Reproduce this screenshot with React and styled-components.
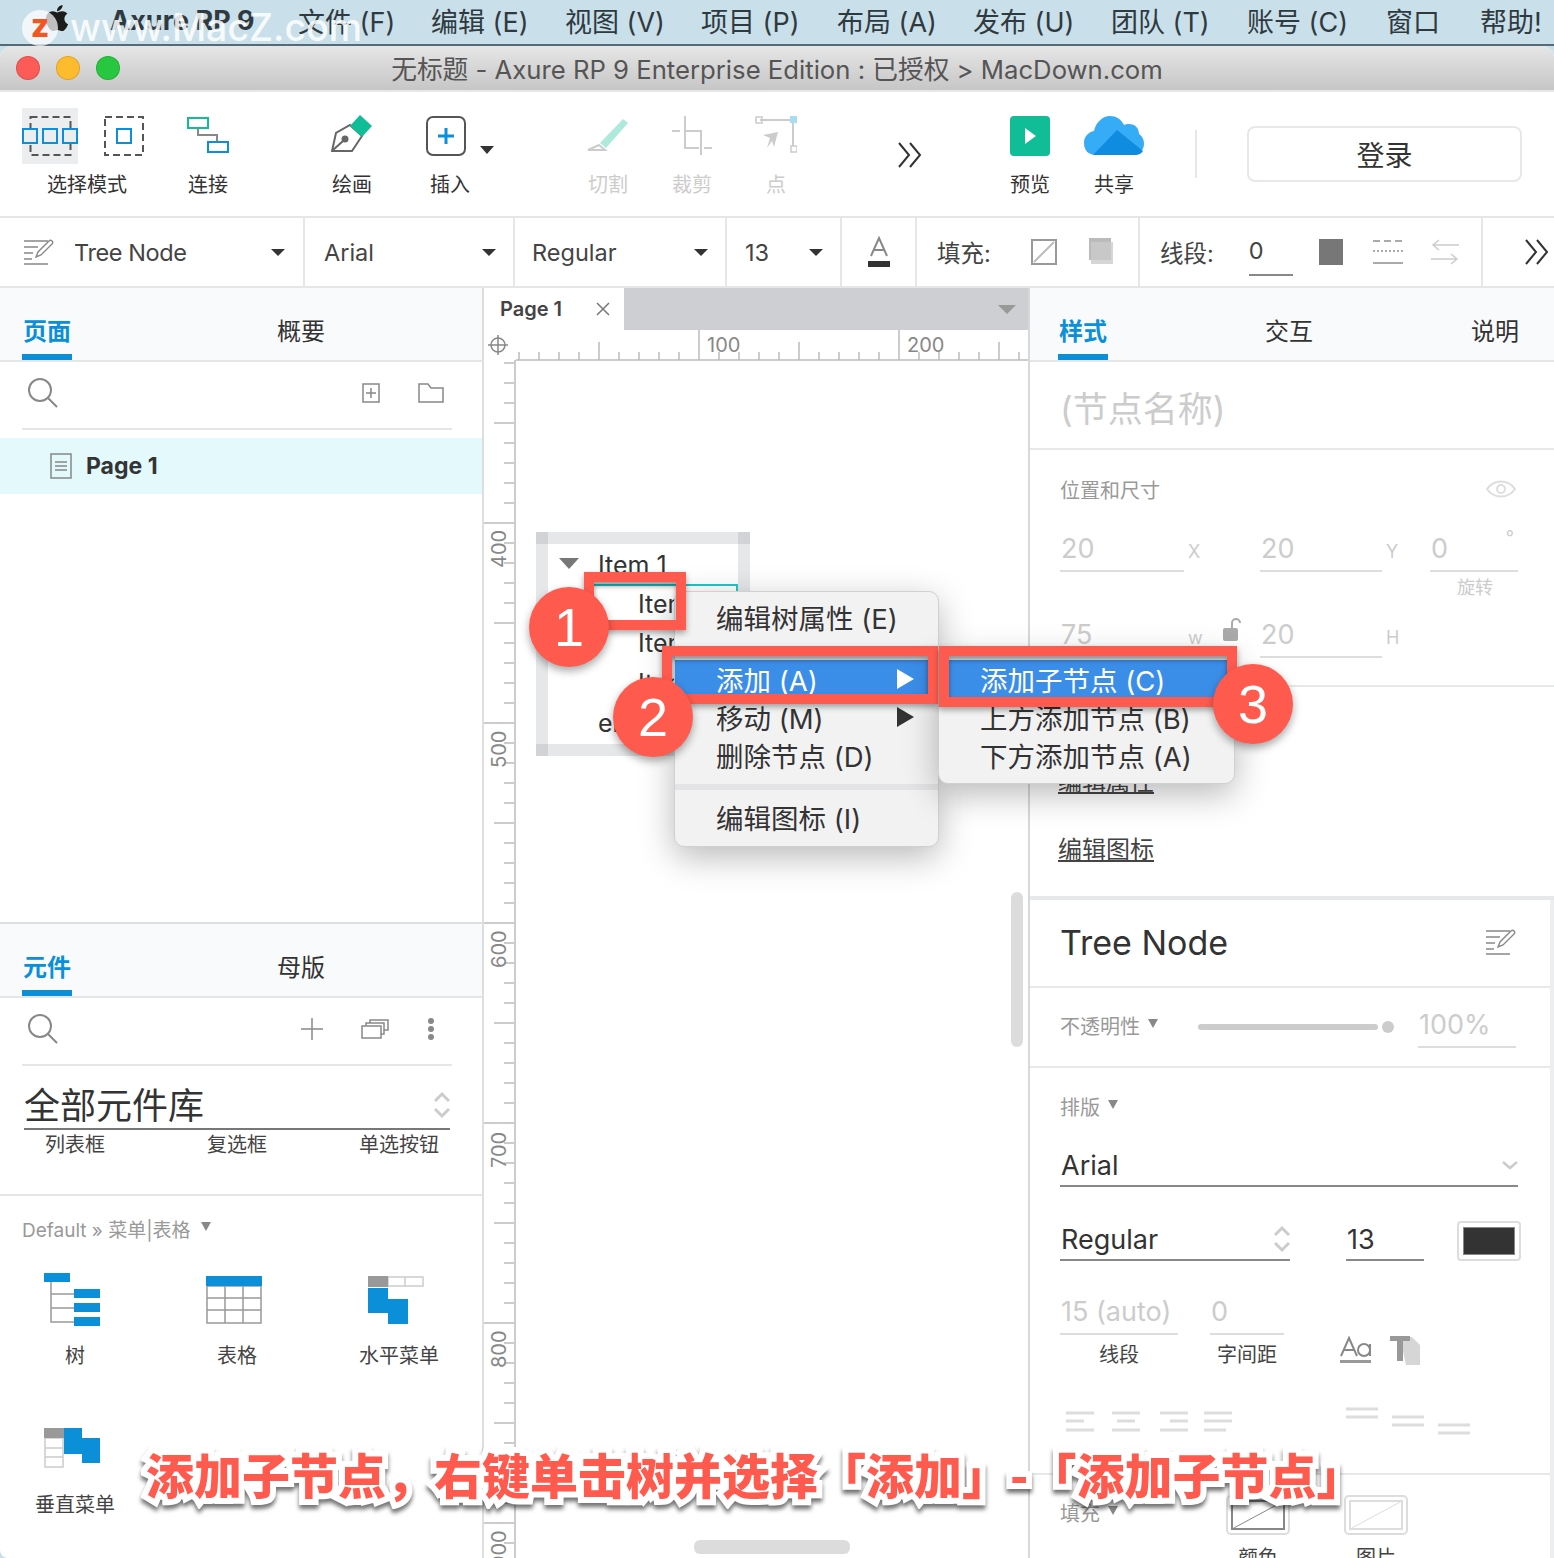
import React from "react";
import styled, { createGlobalStyle } from "styled-components";
import { FaApple } from "react-icons/fa";

const GlobalStyle = createGlobalStyle`
  html, body { margin: 0; padding: 0; background: #fff; }
  * { box-sizing: border-box; }
`;

const BLUE = "#0a8fd8";
const RED = "#ff5a4d";
const LINE = "#e4e6e8";

const Page = styled.div`
  position: relative;
  width: 1554px;
  height: 1558px;
  overflow: hidden;
  background: #c9dfe9;
  font-family: Inter, "Noto Sans CJK SC", sans-serif;
  color: #333;
`;

const MenuBar = styled.div`
  display: flex;
  align-items: center;
  gap: 39px;
  height: 46px;
  padding: 0 0 4px 110px;
  font-size: 27px;
  white-space: nowrap;
  color: #2f3a40;
  border-bottom: 2px solid #556b78;
`;

const AppName = styled.span`
  flex: 0 0 149px;
  min-width: 0;
  font-weight: 700;
  font-size: 27px;
`;

const MenuItem = styled.span`
  flex: 0 0 ${p => p.$w}px;
  min-width: 0;
`;

const Window = styled.div`
  height: 1512px;
  background: #fff;
  border-radius: 12px 12px 0 8px;
  overflow: hidden;
  display: flex;
  flex-direction: column;
`;

const TitleBar = styled.div`
  position: relative;
  flex: 0 0 46px;
  display: flex;
  align-items: center;
  justify-content: center;
  padding-bottom: 2px;
  background: linear-gradient(#e6e6e6, #c6c6c6);
  border-bottom: 2px solid #e8e8e8;
  font-size: 25.7px;
  color: #555;
`;

const Lights = styled.div`
  position: absolute;
  left: 16px;
  top: 10px;
  display: flex;
  gap: 16px;
`;

const Light = styled.span`
  width: 24px;
  height: 24px;
  border-radius: 50%;
  background: ${p => p.$c};
  border: 1px solid rgba(0, 0, 0, 0.12);
`;

const Toolbar = styled.div`
  flex: 0 0 126px;
  display: flex;
  padding-left: 22px;
  border-bottom: 2px solid ${LINE};
`;

const ToolItem = styled.div`
  position: relative;
  flex: 0 0 ${p => p.$w || 84}px;
  margin-left: ${p => p.$ml || 0}px;
  display: flex;
  flex-direction: column;
  align-items: center;
  padding-top: 16px;
`;

const IconSlot = styled.div`
  height: 56px;
  margin-right: ${p => p.$shift || 0}px;
  padding-top: ${p => p.$pt || 0}px;
  display: flex;
  gap: 4px;
  align-items: flex-start;
`;

const ToolLabel = styled.div`
  margin-top: 8px;
  font-size: 20px;
  line-height: 26px;
  color: ${p => (p.$muted ? "#ccc" : "#333")};
`;

const InsertCaret = styled.span`
  position: absolute;
  left: 72px;
  top: 54px;
  width: 0;
  height: 0;
  border-left: 7px solid transparent;
  border-right: 7px solid transparent;
  border-top: 8px solid #333;
`;

const ToolDivider = styled.div`
  width: 2px;
  height: 48px;
  margin: 38px 0 0 39px;
  background: #e6e6e6;
`;

const LoginButton = styled.div`
  width: 275px;
  height: 56px;
  margin: 34px 0 0 50px;
  border: 2px solid #e6e8ea;
  border-radius: 8px;
  display: flex;
  align-items: center;
  justify-content: center;
  font-size: 28px;
  color: #333;
`;

const FormatBar = styled.div`
  flex: 0 0 70px;
  display: flex;
  border-bottom: 2px solid ${LINE};
`;

const FormatCell = styled.div`
  flex: 0 0 ${p => p.$w}px;
  display: flex;
  align-items: center;
  padding: 0 ${p => p.$pr || 0}px 0 ${p => p.$pl || 0}px;
  border-right: 2px solid ${LINE};
  font-size: 23.5px;
  color: #444;
  &:last-child { border-right: 0; flex: 1; }
`;

const Caret = styled.span`
  margin-left: ${p => p.$ml || "auto"};
  margin-bottom: ${p => p.$up || 0}px;
  width: 0;
  height: 0;
  border-left: ${p => p.$s || 7}px solid transparent;
  border-right: ${p => p.$s || 7}px solid transparent;
  border-top: ${p => p.$t || p.$s || 7}px solid ${p => p.$c || "#333"};
`;

const CellText = styled.span`
  margin-left: ${p => p.$ml}px;
  letter-spacing: -0.4px;
`;

const CellGap = styled.span`
  flex: 0 0 ${p => p.$w}px;
`;

const FormatValue = styled.span`
  width: 44px;
  height: 44px;
  margin-left: 35px;
  margin-top: 4px;
  line-height: 38px;
  border-bottom: 2px solid #888;
`;

const StrokeColor = styled.span`
  width: 24px;
  height: 26px;
  margin-left: 26px;
  background: #777;
`;

const Workspace = styled.div`
  flex: 1;
  display: flex;
  min-height: 0;
`;

const LeftPanel = styled.div`
  flex: 0 0 484px;
  display: flex;
  flex-direction: column;
  border-right: 2px solid #dcdee0;
`;

const PanelTop = styled.div`
  flex: 0 0 636px;
  border-bottom: 2px solid #dcdee0;
`;

const Tabs = styled.div`
  flex: 0 0 74px;
  display: flex;
  gap: ${p => p.$gap}px;
  height: 74px;
  padding-left: ${p => p.$pl}px;
  background: #f9fafc;
  border-bottom: 2px solid ${LINE};
`;

const Tab = styled.div`
  width: 50px;
  height: 72px;
  padding-top: 16px;
  display: flex;
  align-items: center;
  justify-content: center;
  font-size: 24px;
  white-space: nowrap;
  font-weight: ${p => (p.$active ? 700 : 400)};
  color: ${p => (p.$active ? BLUE : "#333")};
  border-bottom: 6px solid ${p => (p.$active ? BLUE : "transparent")};
`;

const SearchRow = styled.div`
  height: 68px;
  margin-left: 22px;
  width: 430px;
  padding: 0 ${p => p.$pr}px 4px 6px;
  display: flex;
  align-items: center;
  gap: 38px;
  border-bottom: 2px solid ${LINE};
  & > svg:first-child { margin-right: auto; }
`;

const PageRow = styled.div`
  height: 56px;
  margin-top: 8px;
  padding-left: 50px;
  display: flex;
  align-items: center;
  gap: 14px;
  background: #e3f9fb;
  font-size: 23px;
  font-weight: 700;
  color: #333;
`;

const LibrarySelect = styled.div`
  height: 64px;
  margin-left: 24px;
  width: 426px;
  display: flex;
  align-items: flex-end;
  justify-content: space-between;
  font-size: 36px;
  line-height: 44px;
  color: #333;
  border-bottom: 2px solid #777;
  svg { margin-bottom: 8px; }
`;

const CutRow = styled.div`
  display: grid;
  grid-template-columns: repeat(3, 150px);
  column-gap: 12px;
  height: 66px;
  padding-top: 2px;
  text-align: center;
  font-size: 20px;
  line-height: 26px;
  color: #444;
  border-bottom: 2px solid ${LINE};
`;

const Crumb = styled.div`
  display: flex;
  align-items: center;
  gap: 8px;
  height: 24px;
  margin: 20px 0 0 22px;
  font-size: 19px;
  color: #999;
`;

const WidgetGrid = styled.div`
  display: grid;
  grid-template-columns: repeat(3, 150px);
  column-gap: 12px;
  row-gap: 58px;
  margin-top: 32px;
`;

const WidgetCell = styled.div`
  display: flex;
  flex-direction: column;
  align-items: center;
`;

const WidgetIcon = styled.div`
  height: ${p => p.$h || 56}px;
  margin: 0 6px 14px 0;
`;

const WidgetLabel = styled.div`
  font-size: 20px;
  line-height: 28px;
  color: #444;
`;

const Center = styled.div`
  position: relative;
  flex: 0 0 546px;
  display: flex;
  flex-direction: column;
  border-right: 2px solid #d6d8da;
`;

const DocTabs = styled.div`
  flex: 0 0 42px;
  display: flex;
  align-items: center;
  justify-content: space-between;
  padding-right: 12px;
  background: #cdcfd2;
`;

const DocTab = styled.div`
  width: 140px;
  height: 42px;
  padding: 0 14px 0 16px;
  display: flex;
  align-items: center;
  justify-content: space-between;
  background: #fff;
  font-size: 20px;
  font-weight: 600;
  color: #444;
`;

const RulerH = styled.div`
  flex: 0 0 32px;
  background: #fff;
  svg { display: block; }
`;

const CanvasRow = styled.div`
  flex: 1;
  display: flex;
  min-height: 0;
`;

const RulerV = styled.div`
  flex: 0 0 32px;
  border-right: 2px solid #ccc;
  margin-top: -2px;
  svg { display: block; }
`;

const Canvas = styled.div`
  position: relative;
  flex: 1;
`;

const TreeBox = styled.div`
  position: absolute;
  left: 20px;
  top: 170px;
  width: 214px;
  height: 224px;
  border: 12px solid #e6e7e9;
`;

const TreeCorner = styled.span`
  position: absolute;
  width: 12px;
  height: 12px;
  background: #d2d3d6;
  ${p => p.$pos}
`;

const TreeLine = styled.div`
  position: absolute;
  left: ${p => p.$x}px;
  top: ${p => p.$y}px;
  font-size: 25px;
  line-height: 30px;
  color: #333;
  white-space: nowrap;
`;

const TreeToggle = styled.span`
  position: absolute;
  left: 11px;
  top: 14px;
  width: 0;
  height: 0;
  border-left: 10px solid transparent;
  border-right: 10px solid transparent;
  border-top: 11px solid #777;
`;

const TreeSelect = styled.div`
  position: absolute;
  left: 36px;
  top: 40px;
  width: 154px;
  height: 40px;
  border: 2px solid #1fc8c8;
`;

const ScrollThumb = styled.div`
  position: absolute;
  background: #dcdcdc;
  border-radius: 6px;
  left: ${p => p.$x}px;
  top: ${p => p.$y}px;
  width: ${p => p.$w}px;
  height: ${p => p.$h}px;
`;

const RightPanel = styled.div`
  flex: 1;
  display: flex;
  flex-direction: column;
  min-width: 0;
`;

const Section = styled.div`
  flex: 0 0 ${p => p.$h}px;
  padding: ${p => p.$pt || 0}px 0 0 30px;
  border-bottom: ${p => p.$bw || 2}px solid #e6e8ea;
`;

const NodeName = styled.div`
  font-size: 35px;
  line-height: 50px;
  color: #ccc;
`;

const HeadRow = styled.div`
  display: flex;
  align-items: center;
  justify-content: space-between;
  padding-right: 38px;
  height: 24px;
  font-size: 20px;
  color: #999;
`;

const HeadLabel = styled.span`
  display: flex;
  align-items: center;
  gap: 8px;
  margin-top: ${p => p.$mt || 0}px;
  font-size: 20px;
  color: #999;
`;

const Row = styled.div`
  display: flex;
  align-items: flex-start;
  height: ${p => p.$h || 46}px;
  margin-top: ${p => p.$mt || 0}px;
`;

const Field = styled.div`
  width: ${p => p.$w}px;
  flex: 0 0 auto;
  height: 46px;
  margin-left: ${p => p.$ml || 0}px;
  padding: ${p => (p.$c ? 4 : 0)}px ${p => p.$pr || 0}px 0 1px;
  display: flex;
  align-items: center;
  justify-content: space-between;
  font-size: 27px;
  color: ${p => p.$c || "#ccc"};
  border-bottom: 2px solid ${p => p.$line || "#ddd"};
  white-space: nowrap;
`;

const Unit = styled.div`
  flex: 0 0 ${p => p.$w}px;
  height: 46px;
  display: flex;
  align-items: center;
  gap: ${p => p.$gap || 14}px;
  padding-left: 4px;
  padding-top: 4px;
  font-size: 18px;
  color: #ccc;
  svg { margin-top: -14px; }
`;

const FieldColumn = styled.div`
  display: flex;
  flex-direction: column;
  text-align: center;
`;

const Degree = styled.span`
  align-self: flex-start;
  font-size: 18px;
  line-height: 24px;
  color: #ccc;
`;

const SmallLabel = styled.div`
  margin-top: ${p => p.$mt || 4}px;
  padding-left: ${p => p.$pl || 0}px;
  font-size: ${p => p.$fs || 18}px;
  line-height: 24px;
  color: ${p => p.$c || "#ccc"};
`;

const EditLink = styled.div`
  width: max-content;
  margin: ${p => p.$mt}px 0 0 -2px;
  font-size: 24px;
  line-height: 28px;
  color: #444;
  text-decoration: underline;
`;

const NodeTitle = styled.div`
  display: flex;
  align-items: center;
  justify-content: space-between;
  padding-right: 38px;
  height: 84px;
  font-size: 34px;
  color: #333;
`;

const OpacityRow = styled.div`
  display: flex;
  align-items: center;
  height: 74px;
  font-size: 20px;
  color: #999;
`;

const Slider = styled.div`
  width: 180px;
  height: 6px;
  margin: 4px 0 0 40px;
  border-radius: 3px;
  background: #ccc;
`;

const SliderDot = styled.span`
  width: 12px;
  height: 12px;
  margin: 4px 0 0 4px;
  border-radius: 50%;
  background: #ccc;
`;

const Swatch = styled.div`
  width: 64px;
  height: 40px;
  margin: 6px 0 0 ${p => p.$ml || 0}px;
  padding: 4px;
  border: 2px solid #ddd;
  border-radius: 4px;
  background: #fff;
`;

const SwatchFill = styled.div`
  height: 100%;
  background: ${p => p.$c};
  border: 1px solid #888;
`;

const TextStyleIcons = styled.span`
  display: flex;
  gap: 18px;
  margin: 46px 0 0 56px;
`;

const AlignWrap = styled.span`
  margin: ${p => p.$mt || 0}px 0 0 ${p => p.$ml}px;
`;

const FillOption = styled.div`
  display: flex;
  flex-direction: column;
  align-items: center;
  gap: 7px;
  margin-left: ${p => p.$ml}px;
  font-size: 20px;
  color: #444;
`;

const Scrollbar = styled.div`
  position: absolute;
  right: 0;
  top: 900px;
  bottom: 0;
  width: 4px;
  background: #eceef0;
`;

const Watermark = styled.div`
  position: absolute;
  left: 70px;
  top: 3px;
  font-size: 37.5px;
  line-height: 50px;
  font-weight: 500;
  color: rgba(255, 255, 255, 0.85);
  white-space: nowrap;
`;

const ZBadge = styled.div`
  position: absolute;
  left: 22px;
  top: 10px;
  width: 36px;
  height: 36px;
  border-radius: 50%;
  background: rgba(255, 255, 255, 0.72);
  display: flex;
  align-items: center;
  justify-content: center;
  font-size: 32px;
  line-height: 32px;
  padding-bottom: 5px;
  font-weight: 800;
  color: #f2571f;
`;

const AppleMark = styled.div`
  position: absolute;
  left: 42px;
  top: 3px;
  color: #1c1c1c;
  display: flex;
`;

const Menu = styled.div`
  position: absolute;
  left: ${p => p.$x}px;
  top: ${p => p.$y}px;
  width: ${p => p.$w}px;
  height: ${p => p.$h}px;
  background: #f2f2f3;
  border-radius: 10px;
  border: 1px solid #d0d0d0;
  box-shadow: 0 10px 34px rgba(0, 0, 0, 0.28);
`;

const MenuRow = styled.div`
  display: flex;
  align-items: center;
  justify-content: space-between;
  height: 38px;
  padding: 0 ${p => p.$pr || 24}px 0 41px;
  margin-top: ${p => p.$mt || 0}px;
  font-size: 27.5px;
  color: ${p => (p.$active ? "#fff" : "#333")};
  background: ${p => (p.$active ? "#3b8ee8" : "transparent")};
  white-space: nowrap;
`;

const MenuArrow = styled.span`
  width: 0;
  height: 0;
  border-top: 10px solid transparent;
  border-bottom: 10px solid transparent;
  border-left: 17px solid ${p => (p.$light ? "#fff" : "#333")};
`;

const MenuRule = styled.div`
  height: 6px;
  margin-top: 10px;
  background: #e4e4e6;
`;

const Callout = styled.div`
  position: absolute;
  left: ${p => p.$x}px;
  top: ${p => p.$y}px;
  width: ${p => p.$w}px;
  height: ${p => p.$h}px;
  border: 10px solid ${RED};
  box-shadow: 0 3px 6px rgba(0, 0, 0, 0.35), inset 0 4px 5px rgba(0, 0, 0, 0.4);
`;

const StepBadge = styled.div`
  position: absolute;
  left: ${p => p.$x - 40}px;
  top: ${p => p.$y - 40}px;
  width: 80px;
  height: 80px;
  border-radius: 50%;
  background: ${RED};
  box-shadow: 0 4px 8px rgba(0, 0, 0, 0.35);
  display: flex;
  align-items: center;
  justify-content: center;
  font-family: "Liberation Sans", sans-serif;
  font-size: 54px;
  color: #fff;
`;

const Caption = styled.div`
  position: absolute;
  left: 146px;
  top: 1438px;
  font-family: "Noto Sans CJK SC", sans-serif;
  font-size: 48px;
  line-height: 70px;
  font-weight: 900;
  color: ${RED};
  white-space: nowrap;
  -webkit-text-stroke: 12px #fff;
  paint-order: stroke fill;
  filter: drop-shadow(0 4px 2px rgba(0, 0, 0, 0.55));
`;

const Search = () => (
  <svg width="30" height="30" viewBox="0 0 30 30" fill="none" stroke="#888" strokeWidth="2">
    <circle cx="12" cy="12" r="11" /><path d="M20 20l9 9" />
  </svg>
);

const EditLines = () => (
  <svg width="30" height="26" viewBox="0 0 30 26" fill="none" stroke="#888" strokeWidth="1.4">
    <path d="M0 2h24M0 8h14M0 14h9M0 20h8M0 25h24" />
    <path d="M12 18l2-5L25 2a2 2 0 0 1 3 3L17 16z" fill="#fff" />
  </svg>
);

const Chevrons = () => (
  <svg width="24" height="26" viewBox="0 0 24 26" fill="none" stroke="#333" strokeWidth="2">
    <path d="M1 1l10 12L1 25M12 1l10 12-10 12" />
  </svg>
);

const UpDown = () => (
  <svg width="16" height="30" viewBox="0 0 16 30" fill="none" stroke="#ccc" strokeWidth="3">
    <path d="M1 11l7-7 7 7M1 19l7 7 7-7" />
  </svg>
);

const SelectAll = () => (
  <svg width="56" height="56" viewBox="0 0 56 56" fill="none">
    <rect width="56" height="56" fill="#ebedef" />
    <rect x="8.5" y="9" width="40" height="38" stroke="#555" strokeWidth="2" strokeDasharray="7 4" />
    <g stroke="#0a8fd8" strokeWidth="2" fill="#ebedef">
      <rect x="1" y="21" width="14" height="14" /><rect x="21" y="21" width="14" height="14" /><rect x="41" y="21" width="14" height="14" />
    </g>
  </svg>
);

const SelectOne = () => (
  <svg width="40" height="56" viewBox="0 0 40 56" fill="none" style={{ marginLeft: 22 }}>
    <rect x="1" y="9" width="38" height="38" stroke="#555" strokeWidth="2" strokeDasharray="7 4" />
    <rect x="13" y="21" width="14" height="14" stroke="#0a8fd8" strokeWidth="2" />
  </svg>
);

const Connect = () => (
  <svg width="42" height="56" viewBox="0 0 42 56" fill="none" strokeWidth="2">
    <path d="M11 18v9h19v9" stroke="#888" />
    <rect x="1" y="10" width="20" height="10" stroke="#10bd96" fill="#fff" />
    <rect x="21" y="34" width="20" height="10" stroke="#0a8fd8" fill="#fff" />
  </svg>
);

const Pen = () => (
  <svg width="42" height="56" viewBox="0 0 42 56" fill="none">
    <path d="M19 17l12 11-10 15H1l4-18z" fill="#fff" stroke="#666" strokeWidth="2" />
    <path d="M19 18L29 7l12 11-10 11z" fill="#10bd96" />
    <circle cx="14" cy="31" r="3.5" fill="#666" /><path d="M2 42l10-9" stroke="#666" strokeWidth="2" />
  </svg>
);

const InsertIcon = () => (
  <svg width="40" height="56" viewBox="0 0 40 56" fill="none">
    <rect x="1" y="9" width="38" height="38" rx="6" stroke="#555" strokeWidth="2" />
    <path d="M20 20v16M12 28h16" stroke="#0a8fd8" strokeWidth="3" />
  </svg>
);

const Cutter = () => (
  <svg width="42" height="56" viewBox="0 0 42 56" fill="none">
    <path d="M36 11l5 4-22 25-6-5z" fill="#aeeadb" />
    <path d="M12 37l6 5H1z" stroke="#ccc" strokeWidth="2" />
  </svg>
);

const Crop = () => (
  <svg width="42" height="56" viewBox="0 0 42 56" fill="none" stroke="#ccc" strokeWidth="2">
    <path d="M1 23h8M14 8v32h14M14 23h16v24M33 40h8" />
  </svg>
);

const PointIcon = () => (
  <svg width="42" height="56" viewBox="0 0 42 56" fill="none">
    <path d="M5 12h30M38 14v24" stroke="#ccc" strokeWidth="2" />
    <rect x="1" y="9" width="6" height="6" stroke="#ccc" strokeWidth="1.5" />
    <rect x="35" y="8" width="7" height="7" fill="#a8dcf5" />
    <rect x="36" y="38" width="6" height="6" stroke="#ccc" strokeWidth="1.5" />
    <path d="M12 40l3-10-7-3 15-3-4 15-2-6z" fill="#ccc" />
  </svg>
);

const PreviewIcon = () => (
  <svg width="40" height="56" viewBox="0 0 40 56">
    <rect y="8" width="40" height="40" rx="4" fill="#10bd96" /><path d="M15 20l11 8-11 8z" fill="#fff" />
  </svg>
);

const Cloud = () => (
  <svg width="60" height="56" viewBox="0 0 60 56">
    <path d="M12 47C4 47 0 42 0 35c0-6 4-11 10-12C12 14 19 8 26 8c6 0 11 3 14 9 2-1 3-1 5-1 6 0 10 4 10 10 3 2 5 5 5 10 0 6-5 11-11 11z" fill="#35acf5" />
    <path d="M9 47l24-25 26 21c-1 2-4 4-8 4z" fill="#0f8be0" />
  </svg>
);

const TextColor = () => (
  <svg width="24" height="32" viewBox="0 0 24 32" fill="none">
    <path d="M4 20l8-18 8 18M7 14h10" stroke="#888" strokeWidth="2" /><rect x="1" y="25" width="22" height="6" fill="#333" />
  </svg>
);

const NoFill = () => (
  <svg width="26" height="26" viewBox="0 0 26 26" fill="none" stroke="#999" strokeWidth="2">
    <rect x="1" y="1" width="24" height="24" /><path d="M3 23L23 3" stroke="#bbb" />
  </svg>
);

const Shade = () => (
  <svg width="28" height="28" viewBox="0 0 28 28"><rect x="2" width="22" height="22" fill="#bbb" /><rect x="4" y="4" width="22" height="22" fill="#ccc" opacity=".8" /></svg>
);

const DashLines = () => (
  <svg width="30" height="26" viewBox="0 0 30 26" stroke="#aaa" strokeWidth="2" fill="none">
    <path d="M0 2h30" strokeDasharray="7 4" /><path d="M0 12h30" strokeDasharray="2 2" /><path d="M0 24h30" />
  </svg>
);

const Arrows = () => (
  <svg width="28" height="26" viewBox="0 0 28 26" stroke="#ccc" strokeWidth="1.5" fill="none">
    <path d="M28 6H2M8 1L2 6l6 5M0 20h26M20 15l6 5-6 5" />
  </svg>
);

const PlusBox = () => (
  <svg width="18" height="20" viewBox="0 0 18 20" fill="none" stroke="#888" strokeWidth="1.5">
    <rect x="1" y="1" width="16" height="18" /><path d="M9 5v10M4 10h10" />
  </svg>
);

const Folder = () => (
  <svg width="26" height="20" viewBox="0 0 26 20" fill="none" stroke="#888" strokeWidth="1.5">
    <path d="M1 19V1h9l3 4h12v14z" />
  </svg>
);

const PageIcon = () => (
  <svg width="22" height="26" viewBox="0 0 22 26" fill="none" stroke="#888" strokeWidth="1.5">
    <rect x="1" y="1" width="20" height="24" /><path d="M5 9h12M5 13h12M5 17h12" />
  </svg>
);

const Plus = () => (
  <svg width="22" height="22" viewBox="0 0 22 22" stroke="#888" strokeWidth="1.5"><path d="M11 0v22M0 11h22" /></svg>
);

const Stack = () => (
  <svg width="28" height="20" viewBox="0 0 28 20" fill="none" stroke="#888" strokeWidth="1.5">
    <rect x="1" y="7" width="19" height="12" /><path d="M5 7V4h18v11h-3M9 4V1h18v10h-4" />
  </svg>
);

const Dots = () => (
  <svg width="8" height="22" viewBox="0 0 8 22" fill="#888"><circle cx="4" cy="3" r="3" /><circle cx="4" cy="11" r="3" /><circle cx="4" cy="19" r="3" /></svg>
);

const CloseX = () => (
  <svg width="14" height="14" viewBox="0 0 14 14" stroke="#777" strokeWidth="1.5"><path d="M1 1l12 12M13 1L1 13" /></svg>
);

const Eye = () => (
  <svg width="30" height="18" viewBox="0 0 30 18" fill="none" stroke="#ddd" strokeWidth="2">
    <path d="M1 9c7-10 21-10 28 0-7 10-21 10-28 0z" /><circle cx="15" cy="9" r="4" />
  </svg>
);

const Lock = () => (
  <svg width="20" height="24" viewBox="0 0 20 24" fill="none">
    <rect y="10" width="15" height="13" rx="2" fill="#aaa" /><path d="M9 10V5a4 4 0 0 1 8 0" stroke="#aaa" strokeWidth="2" />
  </svg>
);

const Down = () => (
  <svg width="16" height="10" viewBox="0 0 16 10" fill="none" stroke="#ccc" strokeWidth="2.5"><path d="M1 2l7 6 7-6" /></svg>
);

const CaseIcon = () => (
  <svg width="32" height="28" viewBox="0 0 32 28" fill="none">
    <path d="M1 21L9 3l8 18M4 15h10" stroke="#888" strokeWidth="2" />
    <circle cx="24" cy="15" r="6" stroke="#888" strokeWidth="2" /><path d="M30 9v12" stroke="#888" strokeWidth="2" />
    <rect y="25" width="31" height="3" fill="#999" />
  </svg>
);

const ShadowT = () => (
  <svg width="30" height="30" viewBox="0 0 30 30">
    <path d="M10 2h12l8 8v20H16z" fill="#d6d6d6" /><path d="M0 1h20v5h-7v20H7V6H0z" fill="#999" />
  </svg>
);

const AlignSet = () => (
  <svg width="170" height="22" viewBox="0 0 170 22" stroke="#ddd" strokeWidth="3">
    <path d="M0 2h28M0 10h18M0 19h28M46 2h28M51 10h18M46 19h28M94 2h28M104 10h18M94 19h28M138 2h28M138 10h28M138 19h22" />
  </svg>
);

const VAlignSet = () => (
  <svg width="126" height="30" viewBox="0 0 126 30" stroke="#ddd" strokeWidth="3">
    <path d="M0 2h32M0 10h32M46 10h32M46 18h32M92 18h32M92 26h32" />
  </svg>
);

const FillPreview = ({ c }) => (
  <svg width="64" height="40" viewBox="0 0 64 40" fill="none">
    <rect x="1" y="1" width="62" height="38" rx="4" stroke="#ddd" strokeWidth="2" />
    <rect x="6" y="6" width="52" height="28" stroke={c} strokeWidth="2" /><path d="M6 34L58 6" stroke={c} />
  </svg>
);

const TreeWidget = () => (
  <svg width="56" height="56" viewBox="0 0 56 56" fill="none">
    <path d="M7 10v40h24M7 22h24M7 36h24" stroke="#999" strokeWidth="1.5" />
    <rect y="1" width="26" height="9" fill={BLUE} /><rect x="30" y="17" width="26" height="9" fill={BLUE} />
    <rect x="30" y="31" width="26" height="9" fill={BLUE} /><rect x="30" y="45" width="26" height="9" fill={BLUE} />
  </svg>
);

const TableWidget = () => (
  <svg width="56" height="56" viewBox="0 0 56 56" fill="none">
    <rect x="1" y="10" width="54" height="37" stroke="#999" strokeWidth="1.5" transform="translate(0 4)" />
    <path d="M19 14v37M37 14v37M1 26h54M1 38h54" stroke="#999" strokeWidth="1.5" />
    <rect y="4" width="56" height="10" fill={BLUE} />
  </svg>
);

const HMenuWidget = () => (
  <svg width="56" height="56" viewBox="0 0 56 56" fill="none">
    <rect x="20" y="5" width="35" height="9" stroke="#ccc" strokeWidth="1.5" /><path d="M37 5v9" stroke="#ccc" strokeWidth="1.5" />
    <rect y="4" width="20" height="11" fill="#999" />
    <path d="M0 16h20v11h20v25H20V41H0z" fill={BLUE} />
  </svg>
);

const VMenuWidget = () => (
  <svg width="56" height="42" viewBox="0 0 56 42" fill="none">
    <rect x="1" y="10" width="18" height="29" stroke="#ccc" strokeWidth="1.5" /><path d="M1 20h18M1 29h18" stroke="#ccc" strokeWidth="1.5" />
    <rect width="20" height="10" fill="#999" />
    <path d="M20 0h18v10h18v25H38v-9H20z" fill={BLUE} />
  </svg>
);

const range = (n, f) => Array.from({ length: n }, (_, i) => f(i));

const HorizontalRuler = () => (
  <svg width="544" height="32" viewBox="0 0 544 32" fill="none">
    <circle cx="14" cy="15" r="7" stroke="#888" strokeWidth="1.5" />
    <path d="M14 5v20M4 15h20" stroke="#888" strokeWidth="1.5" />
    <path d="M32 30h512" stroke="#ccc" strokeWidth="2" />
    {range(26, i => {
      const x = 35 + i * 20;
      const big = i % 10 === 9;
      const mid = i % 10 === 4;
      return <path key={i} d={`M${x} ${big ? 0 : mid ? 12 : 22}V30`} stroke="#bbb" strokeWidth="1.5" />;
    })}
    <text x="223" y="22" fontFamily="Inter, sans-serif" fontSize="20" fill="#888">100</text>
    <text x="423" y="22" fontFamily="Inter, sans-serif" fontSize="20" fill="#888">200</text>
  </svg>
);

const VerticalRuler = () => (
  <svg width="30" height="1200" viewBox="0 0 30 1200" fill="none">
    {range(60, i => {
      const y = 3 + i * 20;
      const big = i % 10 === 8;
      const mid = i % 10 === 3;
      return <path key={i} d={`M${big ? 0 : mid ? 10 : 20} ${y}H30`} stroke="#bbb" strokeWidth="1.5" />;
    })}
    {[400, 500, 600, 700, 800, 900].map((v, i) => (
      <text key={v} transform={`translate(22 ${208 + i * 200}) rotate(-90)`} fontFamily="Inter, sans-serif" fontSize="20" fill="#888">{v}</text>
    ))}
  </svg>
);

export default function App() {
  return (
    <Page>
      <GlobalStyle />
      <MenuBar>
        <AppName>Axure RP 9</AppName>
        <MenuItem $w={94}>文件 (F)</MenuItem>
        <MenuItem $w={95}>编辑 (E)</MenuItem>
        <MenuItem $w={97}>视图 (V)</MenuItem>
        <MenuItem $w={97}>项目 (P)</MenuItem>
        <MenuItem $w={97}>布局 (A)</MenuItem>
        <MenuItem $w={99}>发布 (U)</MenuItem>
        <MenuItem $w={97}>团队 (T)</MenuItem>
        <MenuItem $w={100}>账号 (C)</MenuItem>
        <MenuItem $w={55}>窗口</MenuItem>
        <MenuItem $w={69}>帮助!</MenuItem>
      </MenuBar>

      <Window>
        <TitleBar>
          <Lights>
            <Light $c="#fc5b57" />
            <Light $c="#fdbb2e" />
            <Light $c="#27c83f" />
          </Lights>
          无标题 - Axure RP 9 Enterprise Edition : 已授权 &gt; MacDown.com
        </TitleBar>

        <Toolbar>
          <ToolItem $w={130}>
            <IconSlot $shift={8}><SelectAll /><SelectOne /></IconSlot>
            <ToolLabel>选择模式</ToolLabel>
          </ToolItem>
          <ToolItem $ml={14}><IconSlot><Connect /></IconSlot><ToolLabel>连接</ToolLabel></ToolItem>
          <ToolItem $ml={60}><IconSlot><Pen /></IconSlot><ToolLabel>绘画</ToolLabel></ToolItem>
          <ToolItem $ml={14}>
            <IconSlot $shift={8}><InsertIcon /></IconSlot>
            <ToolLabel>插入</ToolLabel>
            <InsertCaret />
          </ToolItem>
          <ToolItem $ml={74}><IconSlot><Cutter /></IconSlot><ToolLabel $muted>切割</ToolLabel></ToolItem>
          <ToolItem><IconSlot><Crop /></IconSlot><ToolLabel $muted>裁剪</ToolLabel></ToolItem>
          <ToolItem><IconSlot><PointIcon /></IconSlot><ToolLabel $muted>点</ToolLabel></ToolItem>
          <ToolItem $ml={50}><IconSlot $pt={34}><Chevrons /></IconSlot></ToolItem>
          <ToolItem $ml={36}><IconSlot><PreviewIcon /></IconSlot><ToolLabel>预览</ToolLabel></ToolItem>
          <ToolItem><IconSlot><Cloud /></IconSlot><ToolLabel>共享</ToolLabel></ToolItem>
          <ToolDivider />
          <LoginButton>登录</LoginButton>
        </Toolbar>

        <FormatBar>
          <FormatCell $w={305} $pl={24} $pr={18}>
            <EditLines /><CellText $ml={20}>Tree Node</CellText><Caret />
          </FormatCell>
          <FormatCell $w={210} $pl={19} $pr={17}>Arial<Caret /></FormatCell>
          <FormatCell $w={212} $pl={17} $pr={17}>Regular<Caret /></FormatCell>
          <FormatCell $w={115} $pl={18} $pr={17}>13<Caret /></FormatCell>
          <FormatCell $w={75} $pl={25}><TextColor /></FormatCell>
          <FormatCell $w={223} $pl={20}>
            填充:<CellGap $w={40} /><NoFill /><CellGap $w={30} /><Shade />
          </FormatCell>
          <FormatCell $w={343} $pl={20}>
            线段:<FormatValue>0</FormatValue>
            <StrokeColor />
            <CellGap $w={30} /><DashLines /><CellGap $w={28} /><Arrows />
          </FormatCell>
          <FormatCell $pl={42}><Chevrons /></FormatCell>
        </FormatBar>

        <Workspace>
          <LeftPanel>
            <PanelTop>
              <Tabs $pl={22} $gap={204}><Tab $active>页面</Tab><Tab>概要</Tab></Tabs>
              <SearchRow $pr={8}><Search /><PlusBox /><Folder /></SearchRow>
              <PageRow><PageIcon />Page 1</PageRow>
            </PanelTop>
            <Tabs $pl={22} $gap={204}><Tab $active>元件</Tab><Tab>母版</Tab></Tabs>
            <SearchRow $pr={17}><Search /><Plus /><Stack /><Dots /></SearchRow>
            <LibrarySelect>全部元件库<UpDown /></LibrarySelect>
            <CutRow><span>列表框</span><span>复选框</span><span>单选按钮</span></CutRow>
            <Crumb>Default » 菜单|表格<Caret $ml="2px" $s={5} $t={9} $up={4} $c="#888" /></Crumb>
            <WidgetGrid>
              <WidgetCell><WidgetIcon><TreeWidget /></WidgetIcon><WidgetLabel>树</WidgetLabel></WidgetCell>
              <WidgetCell><WidgetIcon><TableWidget /></WidgetIcon><WidgetLabel>表格</WidgetLabel></WidgetCell>
              <WidgetCell><WidgetIcon><HMenuWidget /></WidgetIcon><WidgetLabel>水平菜单</WidgetLabel></WidgetCell>
              <WidgetCell><WidgetIcon $h={49}><VMenuWidget /></WidgetIcon><WidgetLabel>垂直菜单</WidgetLabel></WidgetCell>
            </WidgetGrid>
          </LeftPanel>

          <Center>
            <DocTabs>
              <DocTab>Page 1<CloseX /></DocTab>
              <Caret $ml="auto" $s={9} $c="#999" />
            </DocTabs>
            <RulerH><HorizontalRuler /></RulerH>
            <CanvasRow>
              <RulerV><VerticalRuler /></RulerV>
              <Canvas>
                <TreeBox>
                  <TreeCorner $pos="left:-12px;top:-12px;" />
                  <TreeCorner $pos="right:-12px;top:-12px;" />
                  <TreeCorner $pos="left:-12px;bottom:-12px;" />
                  <TreeToggle />
                  <TreeLine $x={50} $y={6}>Item 1</TreeLine>
                  <TreeSelect />
                  <TreeLine $x={90} $y={45}>Item</TreeLine>
                  <TreeLine $x={90} $y={84}>Item</TreeLine>
                  <TreeLine $x={90} $y={124}>Item</TreeLine>
                  <TreeLine $x={50} $y={164}>em</TreeLine>
                </TreeBox>
              </Canvas>
            </CanvasRow>
            <ScrollThumb $x={527} $y={604} $w={12} $h={155} />
            <ScrollThumb $x={210} $y={1252} $w={156} $h={14} />
          </Center>

          <RightPanel>
            <Tabs $pl={28} $gap={156}><Tab $active>样式</Tab><Tab>交互</Tab><Tab>说明</Tab></Tabs>
            <Section $h={88} $pt={22}><NodeName>(节点名称)</NodeName></Section>
            <Section $h={237} $pt={27}>
              <HeadRow>位置和尺寸<Eye /></HeadRow>
              <Row $mt={25} $h={86}>
                <Field $w={124}>20</Field><Unit $w={76}>X</Unit>
                <Field $w={122}>20</Field><Unit $w={48}>Y</Unit>
                <FieldColumn>
                  <Field $w={88} $pr={4}>0<Degree>°</Degree></Field>
                  <SmallLabel $pl={2}>旋转</SmallLabel>
                </FieldColumn>
              </Row>
              <Row>
                <Field $w={124}>75</Field>
                <Unit $w={76} $gap={20}>w<Lock /></Unit>
                <Field $w={122}>20</Field><Unit $w={48}>H</Unit>
              </Row>
            </Section>
            <Section $h={213} $bw={4} $pt={81}>
              <EditLink $mt={0}>编辑属性</EditLink>
              <EditLink $mt={40}>编辑图标</EditLink>
            </Section>
            <Section $h={88}>
              <NodeTitle>Tree Node<EditLines /></NodeTitle>
            </Section>
            <Section $h={80}>
              <OpacityRow>
                不透明性<Caret $ml="8px" $s={5} $t={9} $up={4} $c="#888" />
                <Slider /><SliderDot />
                <Field $w={98} $ml={24}>100%</Field>
              </OpacityRow>
            </Section>
            <Section $h={407} $pt={26}>
              <HeadRow>
                <HeadLabel>排版<Caret $ml="0" $s={5} $t={9} $up={4} $c="#888" /></HeadLabel>
              </HeadRow>
              <Row $mt={23}>
                <Field $w={458} $c="#333" $line="#888">Arial<Down /></Field>
              </Row>
              <Row $mt={28}>
                <Field $w={230} $c="#333" $line="#888">Regular<UpDown /></Field>
                <Field $w={78} $ml={56} $c="#333" $line="#888">13</Field>
                <Swatch $ml={33}><SwatchFill $c="#333" /></Swatch>
              </Row>
              <Row $mt={28} $h={78}>
                <FieldColumn><Field $w={118}>15 (auto)</Field><SmallLabel $mt={8} $fs={20} $c="#444">线段</SmallLabel></FieldColumn>
                <FieldColumn><Field $w={74} $ml={32}>0</Field><SmallLabel $mt={8} $fs={20} $c="#444" $pl={32}>字间距</SmallLabel></FieldColumn>
                <TextStyleIcons><CaseIcon /><ShadowT /></TextStyleIcons>
              </Row>
              <Row $mt={44}>
                <AlignWrap $ml={6}><AlignSet /></AlignWrap>
                <AlignWrap $ml={110} $mt={-4}><VAlignSet /></AlignWrap>
              </Row>
            </Section>
            <Section $h={120} $pt={20}>
              <Row $h={90}>
                <HeadLabel $mt={3}>填充<Caret $ml="0" $s={5} $t={9} $up={4} $c="#888" /></HeadLabel>
                <FillOption $ml={108}><FillPreview c="#888" />颜色</FillOption>
                <FillOption $ml={54}><FillPreview c="#ddd" />图片</FillOption>
              </Row>
            </Section>
            <Scrollbar />
          </RightPanel>
        </Workspace>
      </Window>

      <AppleMark><FaApple size={30} /></AppleMark>
      <ZBadge>z</ZBadge>
      <Watermark>www.MacZ.com</Watermark>

      <Menu $x={674} $y={591} $w={265} $h={256}>
        <MenuRow $mt={6}>编辑树属性 (E)</MenuRow>
        <MenuRow $mt={24} $active>添加 (A)<MenuArrow $light /></MenuRow>
        <MenuRow>移动 (M)<MenuArrow /></MenuRow>
        <MenuRow>删除节点 (D)</MenuRow>
        <MenuRule />
        <MenuRow $mt={8}>编辑图标 (I)</MenuRow>
      </Menu>
      <Menu $x={938} $y={650} $w={297} $h={134}>
        <MenuRow $mt={9} $active>添加子节点 (C)</MenuRow>
        <MenuRow>上方添加节点 (B)</MenuRow>
        <MenuRow>下方添加节点 (A)</MenuRow>
      </Menu>

      <Callout $x={584} $y={572} $w={102} $h={58} />
      <Callout $x={662} $y={646} $w={276} $h={58} />
      <Callout $x={939} $y={646} $w={298} $h={61} />
      <StepBadge $x={569} $y={627}>1</StepBadge>
      <StepBadge $x={653} $y={717}>2</StepBadge>
      <StepBadge $x={1253} $y={704}>3</StepBadge>

      <Caption>添加子节点，右键单击树并选择「添加」-「添加子节点」</Caption>
    </Page>
  );
}
